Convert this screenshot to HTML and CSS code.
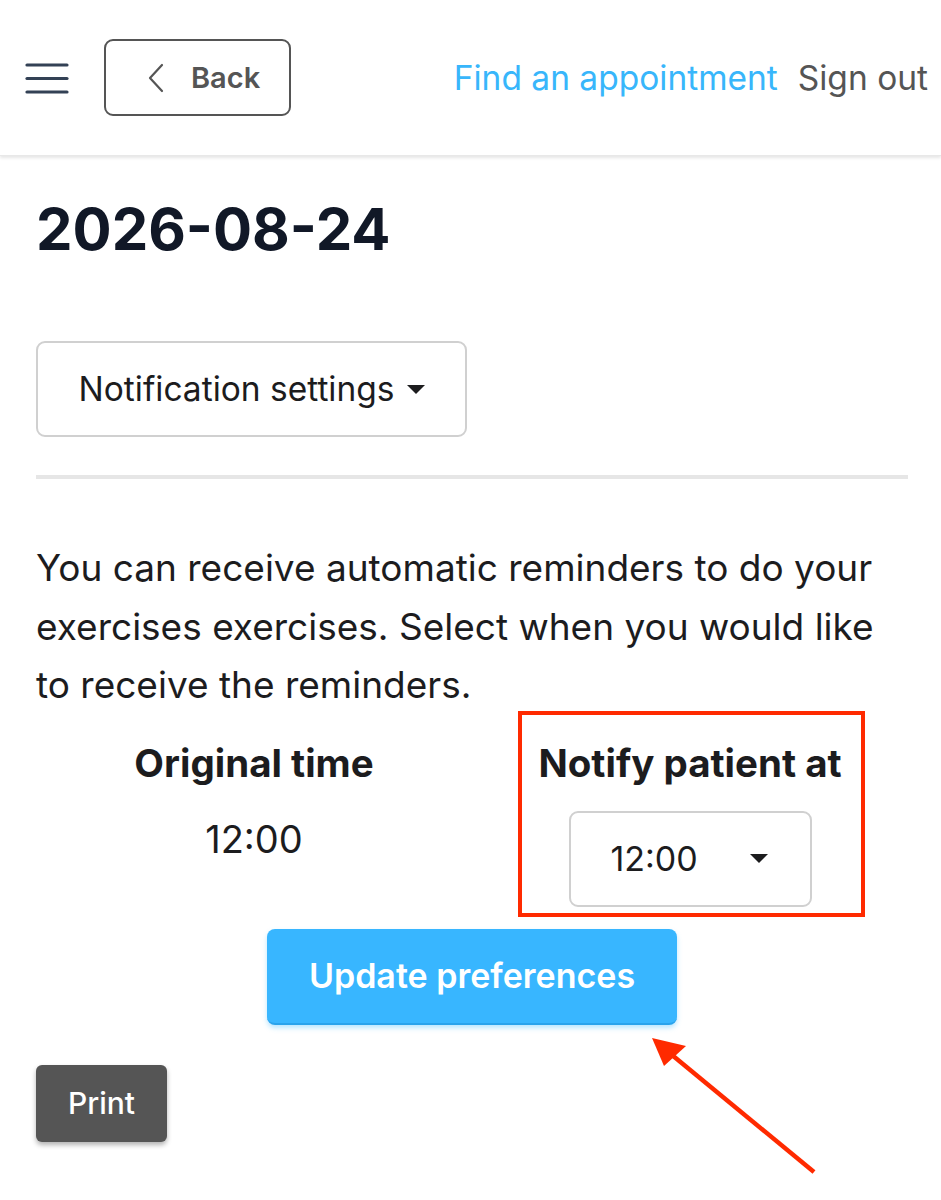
FILE: index.html
```html
<!DOCTYPE html>
<html lang="en">
<head>
<meta charset="utf-8">
<title>2026-08-24</title>
<link rel="stylesheet" href="styles.css">
</head>
<body>
<header class="topbar">
  <button class="menu-btn" aria-label="Menu">
    <svg width="44" height="32" viewBox="0 0 44 32"><g stroke="#334155" stroke-width="3.2" stroke-linecap="round"><line x1="2" y1="3" x2="42" y2="3"/><line x1="2" y1="16.5" x2="42" y2="16.5"/><line x1="2" y1="30" x2="42" y2="30"/></g></svg>
  </button>
  <button class="back-btn">
    <svg class="chev" width="16" height="30" viewBox="0 0 16 30"><polyline points="14,2 2,15 14,28" fill="none" stroke="#555" stroke-width="2.2" stroke-linecap="round" stroke-linejoin="round"/></svg>
    <span>Back</span>
  </button>
  <nav class="nav">
    <a class="nav-link primary" href="#">Find an appointment</a>
    <a class="nav-link" href="#">Sign out</a>
  </nav>
</header>

<main class="content">
  <h1 class="date">2026-08-24</h1>
  <button class="dropdown-btn">Notification settings <span class="caret"></span></button>
  <hr class="divider">
  <p class="intro">You can receive automatic reminders to do your exercises exercises. Select when you would like to receive the reminders.</p>

  <div class="times">
    <div class="col">
      <h3 class="col-title">Original time</h3>
      <div class="time-value">12:00</div>
    </div>
    <div class="col col-notify">
      <h3 class="col-title">Notify patient at</h3>
      <div class="select"><span>12:00</span><span class="caret"></span></div>
      <div class="highlight"></div>
    </div>
  </div>

  <div class="actions">
    <button class="update-btn">Update preferences</button>
    <svg class="arrow" width="180" height="150" viewBox="0 0 180 150"><line x1="164" y1="134" x2="22" y2="17" stroke="#ff2a00" stroke-width="4.5"/><polygon points="2,0 36,8 14,28" fill="#ff2a00"/></svg>
  </div>

  <button class="print-btn">Print</button>
</main>
</body>
</html>
```

FILE: styles.css
```css
* { box-sizing: border-box; }
html, body { margin: 0; padding: 0; background: #fff; }
body {
  font-family: Inter, "Noto Sans", "Liberation Sans", sans-serif;
  color: #1c1c1e;
  width: 941px;
  min-height: 1200px;
  overflow-x: hidden;
}
button { font-family: inherit; cursor: pointer; }

.topbar {
  height: 156px;
  display: flex;
  align-items: center;
  padding: 0 13px 0 25px;
  box-shadow: 0 2px 3px rgba(0,0,0,0.10);
  border-bottom: 1px solid #e8e8e8;
}
.menu-btn {
  background: none;
  border: 0;
  padding: 0;
  width: 44px;
  height: 32px;
  display: flex;
}
.back-btn {
  margin-left: 35px;
  width: 187px;
  height: 77px;
  border: 2px solid #555;
  border-radius: 9px;
  background: #fff;
  display: flex;
  align-items: center;
  padding: 0 0 0 42px;
  gap: 27px;
  color: #555;
  font-size: 29px;
  font-weight: 600;
}
.nav {
  margin-left: auto;
  display: flex;
  gap: 20px;
  align-items: center;
}
.nav-link {
  font-size: 33.5px;
  color: #555;
  text-decoration: none;
}
.nav-link.primary { color: #38b6fb; }

.content {
  padding: 0 33px 0 36px;
}
.date {
  margin: 37px 0 0;
  font-size: 58px;
  line-height: 72px;
  font-weight: 700;
  color: #111827;
}
.dropdown-btn {
  margin-top: 76px;
  width: 431px;
  height: 96px;
  border: 2px solid #d0d0d0;
  border-radius: 9px;
  background: #fff;
  font-size: 33.5px;
  color: #1c1c1e;
  display: flex;
  align-items: center;
  justify-content: center;
  gap: 12px;
}
.caret {
  display: inline-block;
  width: 0; height: 0;
  border-left: 9px solid transparent;
  border-right: 9px solid transparent;
  border-top: 9px solid #1c1c1e;
}
.divider {
  margin: 38px 0 0;
  border: 0;
  height: 4px;
  background: #e6e6e6;
}
.intro {
  margin: 60px 0 0;
  font-size: 37px;
  line-height: 58.5px;
  color: #1c1c1e;
}
.times {
  display: grid;
  grid-template-columns: 1fr 1fr;
}
.col {
  display: flex;
  flex-direction: column;
  align-items: center;
  position: relative;
}
.col-title {
  margin: 24px 0 0;
  font-size: 38.5px;
  line-height: 48px;
  font-weight: 700;
  color: #1c1c1e;
}
.time-value {
  margin-top: 30px;
  font-size: 38px;
  line-height: 44px;
}
.select {
  margin-top: 24px;
  width: 243px;
  height: 96px;
  border: 2px solid #d0d0d0;
  border-radius: 9px;
  display: flex;
  align-items: center;
  padding: 0 42px 0 40px;
  justify-content: space-between;
  font-size: 34px;
}
.highlight {
  position: absolute;
  left: 46px;
  top: -4px;
  width: 347px;
  height: 206px;
  border: 4px solid #ff2a00;
}
.actions {
  position: relative;
  display: flex;
  justify-content: center;
  margin-top: 22px;
}
.update-btn {
  width: 410px;
  height: 96px;
  border: 0;
  border-radius: 8px;
  background: #38b6ff;
  color: #fff;
  font-size: 34px;
  font-weight: 600;
  box-shadow: 0 3px 5px rgba(56,182,255,0.35);
  border-bottom: 2px solid #2aa3ec;
}
.arrow {
  position: absolute;
  left: 614px;
  top: 109px;
}
.print-btn {
  margin-top: 40px;
  width: 131px;
  height: 77px;
  border: 0;
  border-radius: 6px;
  background: #555;
  color: #fff;
  font-size: 30px;
  font-weight: 500;
  box-shadow: 0 3px 5px rgba(0,0,0,0.3);
}
```
